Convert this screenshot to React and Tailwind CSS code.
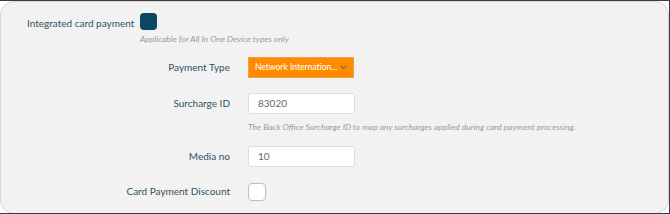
import React from 'react';

const font = { fontFamily: 'Lato, "Noto Sans", sans-serif' };

const Row = ({ label, children, className = '' }) => (
  <div className={`flex items-center ${className}`}>
    <div className="w-[229px] shrink-0 text-right text-[10px] text-[#34515f] whitespace-nowrap">{label}</div>
    <div className="ml-[18px]">{children}</div>
  </div>
);

const Input = ({ value }) => (
  <div className="w-[107px] h-[21px] bg-white border border-[#dedede] rounded-[2px] flex items-center px-[9px] text-[10px] text-[#666]">
    {value}
  </div>
);

const App = () => {
  return (
    <div className="w-[670px] h-[214px] bg-white border-t border-r border-b border-[#3d3d3d] overflow-hidden" style={font}>
      <div className="h-[213px] w-[669px] bg-[#f2f2f2] border border-[#d6d6d6] rounded-[14px] pt-[11px]">
        {/* Integrated card payment */}
        <div className="flex items-start pl-[26px]">
          <div className="w-[113px] text-[10px] text-[#34515f] mt-[3px] whitespace-nowrap">Integrated card payment</div>
          <div>
            <div className="w-[17px] h-[17px] rounded-[4px] bg-[#0b4662]"></div>
            <div className="mt-[3px] text-[8.5px] italic text-[#9a9a9a] whitespace-nowrap">Applicable for All In One Device types only</div>
          </div>
        </div>

        <Row label="Payment Type" className="mt-[11px]">
          <div className="w-[106px] h-[21px] bg-[#ff8a00] border border-[#f0a040] flex items-center justify-between pl-[6px] pr-[6px] text-[8.5px] text-white whitespace-nowrap">
            <span>Network Internation...</span>
            <svg width="7" height="5" viewBox="0 0 7 5" fill="none" stroke="#8a6a4a" strokeWidth="1.2" className="shrink-0">
              <path d="M1 1l2.5 2.5L6 1" />
            </svg>
          </div>
        </Row>

        <Row label="Surcharge ID" className="mt-[15px]">
          <Input value="83020" />
        </Row>
        <div className="ml-[247px] mt-[7px] text-[8.5px] italic text-[#9a9a9a] whitespace-nowrap">
          The Back Office Surcharge ID to map any surcharges applied during card payment processing.
        </div>

        <Row label="Media no" className="mt-[12px]">
          <Input value="10" />
        </Row>

        <Row label="Card Payment Discount" className="mt-[16px]">
          <div className="w-[18px] h-[18px] rounded-[4px] bg-white border border-[#bdbdbd]"></div>
        </Row>
      </div>
    </div>
  );
};

export default App;
